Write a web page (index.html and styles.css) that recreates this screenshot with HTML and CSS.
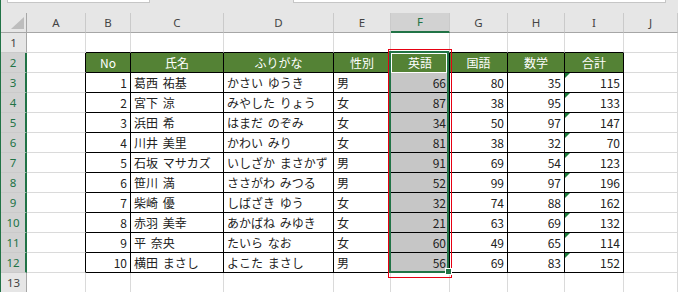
FILE: index.html
```html
<!DOCTYPE html>
<html lang="ja">
<head>
  <meta charset="UTF-8" />
  <meta name="viewport" content="width=device-width, initial-scale=1" />
  <title>成績一覧 - Excel</title>
  <link rel="stylesheet" href="styles.css">
</head>
<body>

<div class="sheet">
  <div class="formula-bar">
    <div class="name-box"></div>
    <div class="formula-box"></div>
  </div>

  <div class="grid" id="grid">
    <!-- セルはJSで生成 -->
  </div>

  <!-- 選択範囲 F2:F12 と赤枠 -->
  <div class="annotation"></div>
  <div class="selection"></div>
  <div class="active-cell"></div>
  <div class="fill-handle"></div>
</div>

<script>
  const columnas = ['A', 'B', 'C', 'D', 'E', 'F', 'G', 'H', 'I', 'J'];
  const encabezados = ['No', '氏名', 'ふりがな', '性別', '英語', '国語', '数学', '合計'];

  // No, 氏名, ふりがな, 性別, 英語, 国語, 数学, 合計
  const alumnos = [
    [1, '葛西 祐基', 'かさい ゆうき', '男', 66, 80, 35, 115],
    [2, '宮下 涼', 'みやした りょう', '女', 87, 38, 95, 133],
    [3, '浜田 希', 'はまだ のぞみ', '女', 34, 50, 97, 147],
    [4, '川井 美里', 'かわい みり', '女', 81, 38, 32, 70],
    [5, '石坂 マサカズ', 'いしざか まさかず', '男', 91, 69, 54, 123],
    [6, '笹川 満', 'ささがわ みつる', '男', 52, 99, 97, 196],
    [7, '柴崎 優', 'しばざき ゆう', '女', 32, 74, 88, 162],
    [8, '赤羽 美幸', 'あかばね みゆき', '女', 21, 63, 69, 132],
    [9, '平 奈央', 'たいら なお', '女', 60, 49, 65, 114],
    [10, '横田 まさし', 'よこた まさし', '男', 56, 69, 83, 152]
  ];

  const columnasNumericas = [0, 4, 5, 6, 7];
  const COL_SEL = 4;   // 英語 (F)
  const COL_TOTAL = 7; // 合計 (I)

  const grid = document.getElementById('grid');

  function celda(clase, texto) {
    const div = document.createElement('div');
    div.className = 'cell ' + clase;
    if (texto !== undefined) div.textContent = texto;
    grid.appendChild(div);
    return div;
  }

  // fila de letras
  const esquina = celda('corner');
  esquina.innerHTML = '<span class="corner-mark"></span>';
  columnas.forEach(c => {
    celda('col-head' + (c === 'F' ? ' is-selected' : ''), c);
  });

  for (let fila = 1; fila <= 13; fila++) {
    const enTabla = fila >= 2 && fila <= 12;
    celda('row-head' + (enTabla ? ' is-selected' : ''), fila);
    celda(enTabla ? 'edge-left' : '');

    for (let i = 0; i < 8; i++) {
      if (fila === 2) {
        celda('t t-head', encabezados[i]);
      } else if (enTabla) {
        let clase = 't';
        if (columnasNumericas.includes(i)) clase += ' num';
        if (i === COL_SEL) clase += ' is-selected';
        if (i === COL_TOTAL) clase += ' flag';
        celda(clase, alumnos[fila - 3][i]);
      } else {
        celda(fila === 1 ? 'edge-top' : '');
      }
    }

    celda('');
  }
</script>

</body>
</html>
```

FILE: styles.css
```css
* {
  box-sizing: border-box;
}

body {
  margin: 0;
  background: #fff;
  font-family: "Noto Sans CJK JP", "Noto Sans", sans-serif;
  font-size: 12px;
  color: #222;
}

.sheet {
  position: relative;
  width: 678px;
  height: 292px;
  overflow: hidden;
  border-left: 1px solid #217346;
}

/* barra de fórmulas (solo el borde inferior) */
.formula-bar {
  height: 13px;
  background: #e6e6e6;
  display: flex;
  align-items: flex-start;
}

.name-box,
.formula-box {
  height: 3px;
  background: #fff;
  border: 1px solid #c6c6c6;
  border-top: none;
}

.name-box {
  margin-left: 6px;
  width: 143px;
}

.formula-box {
  margin-left: 143px;
  width: 373px;
}

/* hoja */
.grid {
  display: grid;
  grid-template-columns: 26px 59px 45px 93px 110px 57px 59px 58px 57px 59px 1fr;
  grid-auto-rows: 20px;
}

.cell {
  display: flex;
  align-items: center;
  padding: 0 3px 1px;
  border-right: 1px solid #dadada;
  border-bottom: 1px solid #dadada;
  white-space: nowrap;
  word-spacing: 2px;
  overflow: hidden;
}

.corner {
  background: #e6e6e6;
  border-right-color: #a6a6a6;
  border-bottom-color: #a6a6a6;
  justify-content: flex-end;
  align-items: flex-end;
  padding: 0 2px 3px 0;
}

.corner-mark {
  width: 0;
  height: 0;
  border-left: 13px solid transparent;
  border-bottom: 12px solid #bdbdbd;
}

.col-head,
.row-head {
  background: #e6e6e6;
  color: #444;
  justify-content: center;
  font-family: "Noto Sans", sans-serif;
  font-size: 11.5px;
}

.col-head {
  border-right-color: #cacaca;
  border-bottom-color: #a6a6a6;
}

.row-head {
  border-right-color: #a6a6a6;
  border-bottom-color: #cacaca;
}

.col-head.is-selected {
  background: #d2d2d2;
  color: #217346;
  border-bottom: 2px solid #217346;
}

.row-head.is-selected {
  background: #d2d2d2;
  color: #217346;
  border-right: 2px solid #217346;
}

/* tabla */
.edge-left {
  border-right-color: #000;
}

.edge-top {
  border-bottom-color: #000;
}

.t {
  border-right-color: #000;
  border-bottom-color: #000;
}

.t-head {
  background: #548235;
  color: #fff;
  justify-content: center;
}

.num {
  justify-content: flex-end;
}

.t.is-selected {
  background: #c6c6c6;
}

.flag {
  position: relative;
}

.flag::before {
  content: '';
  position: absolute;
  top: 0;
  left: 0;
  border-top: 5px solid #1b7a3a;
  border-right: 5px solid transparent;
}

/* selección */
.annotation {
  position: absolute;
  left: 387px;
  top: 49px;
  width: 64px;
  height: 229px;
  border: 1px solid #e60012;
}

.selection {
  position: absolute;
  left: 388px;
  top: 51px;
  width: 60px;
  height: 222px;
  border: 2px solid #217346;
}

.active-cell {
  position: absolute;
  left: 390px;
  top: 53px;
  width: 56px;
  height: 20px;
  border: 1px solid #fff;
}

.fill-handle {
  position: absolute;
  left: 444px;
  top: 268px;
  width: 7px;
  height: 7px;
  background: #217346;
  border: 1px solid #fff;
}
```
